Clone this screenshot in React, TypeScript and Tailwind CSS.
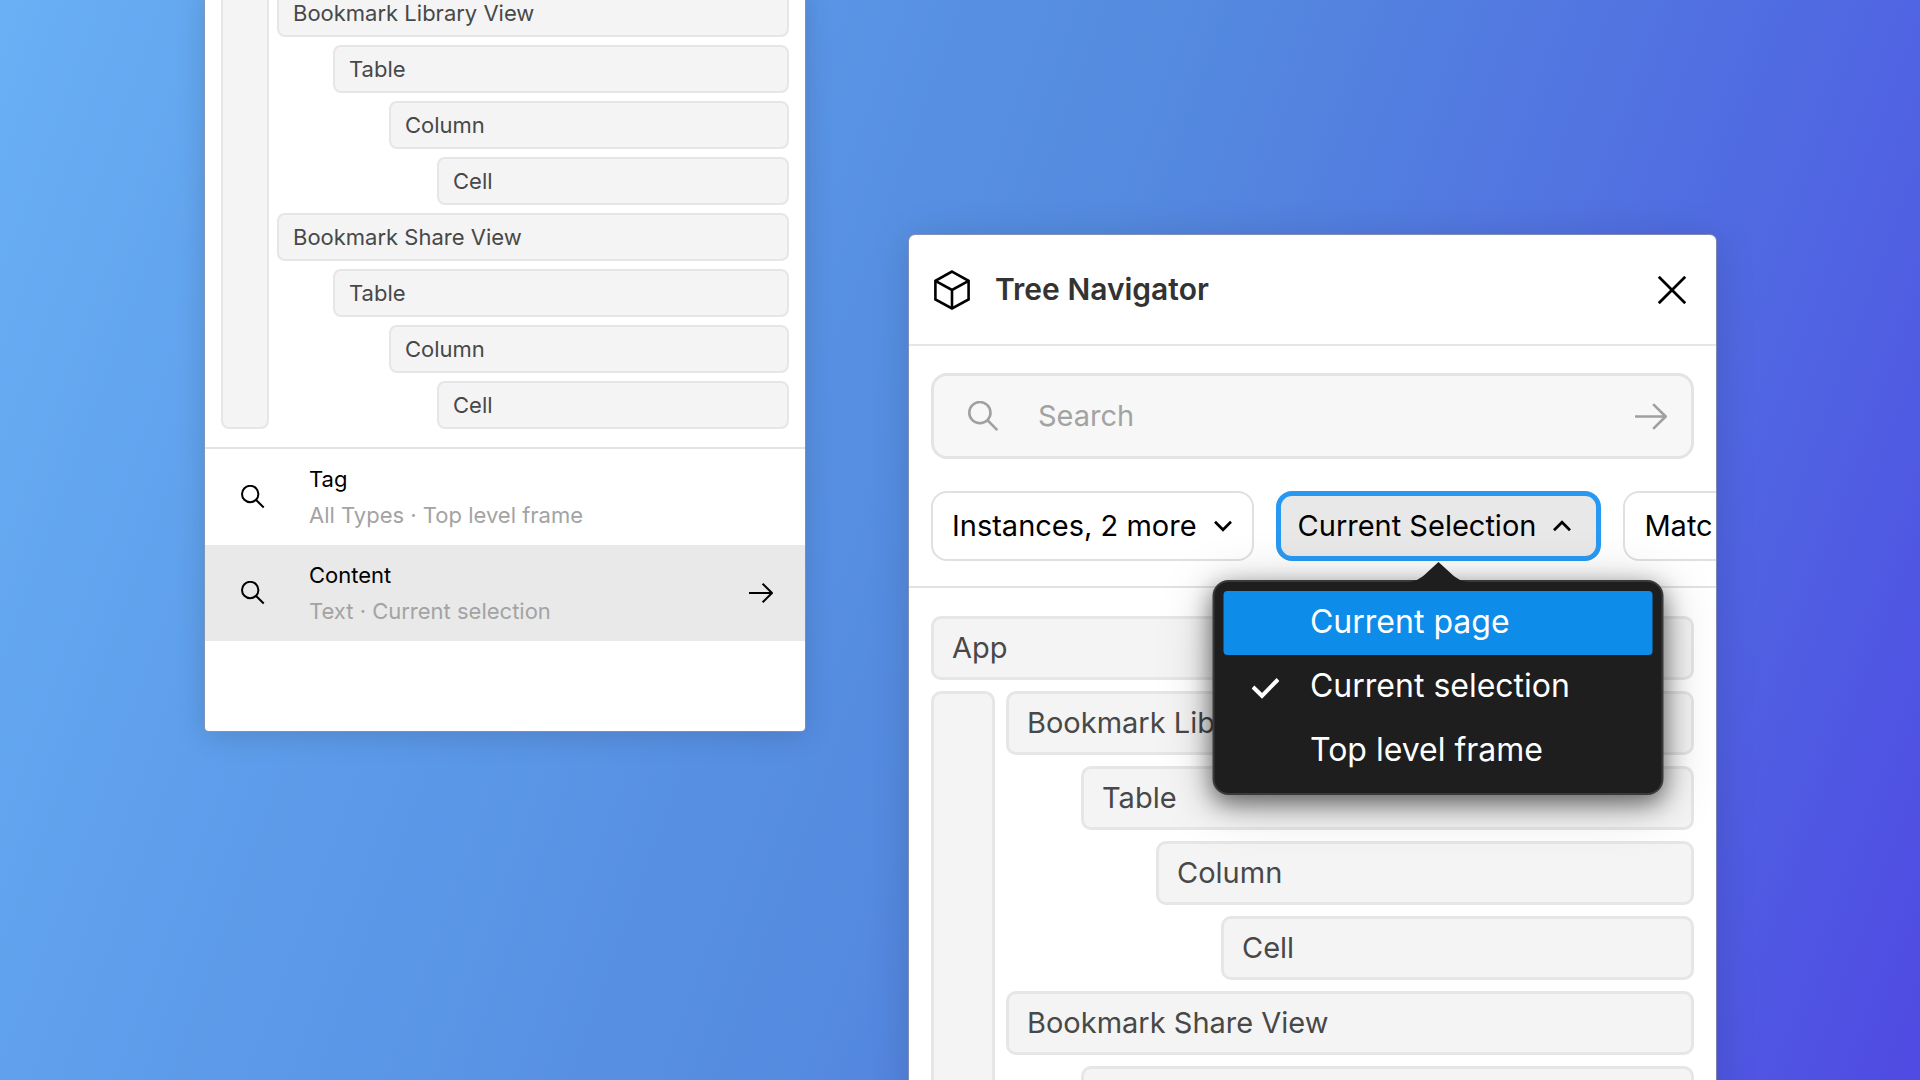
import { useState } from "react";

type Size = "sm" | "lg";

interface TreeNode {
    label: string;
    depth: number;
}

const bookmarkNodes: TreeNode[] = [
    { label: "Bookmark Library View", depth: 1 },
    { label: "Table", depth: 2 },
    { label: "Column", depth: 3 },
    { label: "Cell", depth: 4 },
    { label: "Bookmark Share View", depth: 1 },
    { label: "Table", depth: 2 },
    { label: "Column", depth: 3 },
    { label: "Cell", depth: 4 },
];

const savedSearches = [
    { title: "Tag", detail: "All Types · Top level frame" },
    { title: "Content", detail: "Text · Current selection" },
];

const scopes = ["Current page", "Current selection", "Top level frame"];

const indents: Record<Size, string[]> = {
    sm: ["", "", "ml-[56px]", "ml-[112px]", "ml-[160px]"],
    lg: ["", "", "ml-[75px]", "ml-[150px]", "ml-[215px]"],
};

function SearchIcon({ className }: { className?: string }) {
    return (
        <svg viewBox="0 0 24 24" fill="none" stroke="currentColor" strokeWidth="2" className={className} aria-hidden="true">
            <circle cx="9.2" cy="9" r="8.2" />
            <path d="M14.900 14.700L22.700 22.500" />
        </svg>
    );
}

function ArrowIcon({ className }: { className?: string }) {
    return (
        <svg viewBox="0 0 24 20" fill="none" stroke="currentColor" strokeWidth="2" strokeLinejoin="round" className={className} aria-hidden="true">
            <path d="M0 10H22.6M13.6 0.7L23 10L13.6 19.3" />
        </svg>
    );
}

function CubeIcon({ className }: { className?: string }) {
    return (
        <svg viewBox="0 0 36 40" fill="none" stroke="currentColor" strokeWidth="2.6" className={className} aria-hidden="true">
            <path d="M18 1.6L34.6 10.8V29.4L18 38.4L1.4 29.4V10.8L18 1.6Z" />
            <path d="M1.4 10.8L18 20L34.6 10.8M18 20V38.4" />
        </svg>
    );
}

function CloseIcon({ className }: { className?: string }) {
    return (
        <svg viewBox="0 0 28 28" stroke="currentColor" strokeWidth="2.8" className={className} aria-hidden="true">
            <path d="M0.8 0.8L27.2 27.2M27.2 0.8L0.8 27.2" />
        </svg>
    );
}

function ChevronIcon({ className }: { className?: string }) {
    return (
        <svg viewBox="0 0 18 12" fill="none" stroke="currentColor" strokeWidth="2.7" className={className} aria-hidden="true">
            <path d="M1 1.8L9 9.8L17 1.8" />
        </svg>
    );
}

function CheckIcon({ className }: { className?: string }) {
    return (
        <svg viewBox="0 0 28 21" fill="none" stroke="currentColor" strokeWidth="4" className={className} aria-hidden="true">
            <path d="M1.5 9L10.5 17.8L26.5 1.5" />
        </svg>
    );
}

function Tree({ nodes, size }: { nodes: TreeNode[]; size: Size }) {
    const small = size === "sm";
    return (
        <div className={small ? "flex gap-2" : "flex gap-[11px]"}>
            <div
                className={`shrink-0 border-[#e6e6e6] bg-[#f4f4f4] ${small ? "w-12 rounded-lg border-2" : "w-16 rounded-[10px] border-[3px]"}`}
            />
            <ul className={`flex min-w-0 grow flex-col ${small ? "gap-2" : "gap-[11px]"}`}>
                {nodes.map((node, idx) => (
                    <li key={idx} className={indents[size][node.depth]}>
                        <TreeRow label={node.label} size={size} />
                    </li>
                ))}
            </ul>
        </div>
    );
}

function TreeRow({ label, size }: { label: string; size: Size }) {
    return (
        <button
            className={`flex w-full items-center border-[#e6e6e6] bg-[#f4f4f4] text-left whitespace-nowrap text-[#484848]
            ${size === "sm" ? "h-12 rounded-lg border-2 px-3.5 text-[22px]" : "h-16 rounded-[10px] border-[3px] px-[18px] text-[29px]"}`}
        >
            {label}
        </button>
    );
}

function SavedSearchPanel() {
    return (
        <section className="-mt-[11px] w-[600px] shrink-0 rounded-b-sm bg-white pb-[90px] shadow-[0_0_0_1px_rgba(150,150,160,0.6),0_4px_30px_rgba(0,0,0,0.15)]">
            <div className="px-4 pb-[18px]">
                <Tree nodes={bookmarkNodes} size="sm" />
            </div>
            <ul className="border-t-2 border-[#e2e2e2]">
                {savedSearches.map((search) => {
                    const active = search.title === "Content";
                    return (
                        <li key={search.title}>
                            <button
                                className={`flex h-24 w-full items-center pr-8 pl-9 text-left text-[22px] leading-9 ${active ? "bg-[#e9e9e9]" : ""}`}
                            >
                                <SearchIcon className="h-6 w-6 shrink-0" />
                                <span className="ml-11 grow">
                                    <span className="block">{search.title}</span>
                                    <span className="block text-[#a3a3a3]">{search.detail}</span>
                                </span>
                                {active && <ArrowIcon className="h-5 w-6" />}
                            </button>
                        </li>
                    );
                })}
            </ul>
        </section>
    );
}

function ScopeMenu({ value, onChange }: { value: string; onChange: (scope: string) => void }) {
    return (
        <div className="absolute top-full left-1/2 z-10 w-[451px] -translate-x-1/2 pt-[19px]">
            <div
                role="menu"
                className="relative rounded-2xl border-2 border-[#3a3a3a] bg-[#1e1e1e] px-[9px] pt-[9px] pb-2.5 shadow-[0_8px_24px_rgba(0,0,0,0.55),0_8px_56px_rgba(0,0,0,0.2)]"
            >
                <svg viewBox="0 0 60 22" className="absolute -top-5 left-1/2 h-[22px] w-[60px] -translate-x-1/2" aria-hidden="true">
                    <path d="M0 20C9 19 13 15.500 18 11L30 0L42 11C47 15.500 51 19 60 20V22H0Z" fill="#1e1e1e" />
                </svg>
                {scopes.map((scope, idx) => (
                    <button
                        key={scope}
                        role="menuitemradio"
                        aria-checked={scope === value}
                        onClick={() => onChange(scope)}
                        className={`flex h-16 w-full items-center rounded pb-0.5 pl-7 text-[32px] text-white ${idx === 0 ? "bg-[#0d8ce9]" : ""}`}
                    >
                        <span className="mt-1 w-[58px] shrink-0">
                            {scope === value && <CheckIcon className="h-[21px] w-7" />}
                        </span>
                        {scope}
                    </button>
                ))}
            </div>
        </div>
    );
}

const pill = "flex h-[70px] items-center gap-[17px] rounded-2xl text-[29px] whitespace-nowrap";

function NavigatorPanel() {
    const [query, setQuery] = useState("");
    const [scope, setScope] = useState("Current selection");

    return (
        <section className="mt-[235px] w-[807px] shrink-0 overflow-hidden rounded-t-md bg-white shadow-[0_0_0_1px_rgba(150,150,170,0.7),0_4px_40px_rgba(0,0,0,0.15)]">
            <header className="flex h-[111px] items-center border-b-2 border-[#e6e6e6] px-[25px]">
                <CubeIcon className="h-10 w-9" />
                <h1 className="ml-[25px] grow text-[30px] font-semibold text-[#333]">Tree Navigator</h1>
                <button aria-label="Close" className="mr-[5px]">
                    <CloseIcon className="h-7 w-7" />
                </button>
            </header>

            <div className="border-b-2 border-[#e2e2e2] px-[22px] pt-[27px] pb-[25px]">
                <form className="flex h-[86px] items-center rounded-2xl border-[3px] border-[#e4e4e4] bg-[#f7f7f7] px-6 pl-[34px] text-[#a0a0a0]">
                    <label htmlFor="query">
                        <SearchIcon className="h-[31px] w-[31px]" />
                    </label>
                    <input
                        id="query"
                        value={query}
                        onChange={(e) => setQuery(e.target.value)}
                        placeholder="Search"
                        className="ml-[39px] min-w-0 grow text-[29px] text-black outline-none placeholder:text-[#a3a3a3]"
                    />
                    <button type="button" aria-label="Submit search">
                        <ArrowIcon className="h-[27px] w-8" />
                    </button>
                </form>

                <div className="mt-8 flex gap-[22px]">
                    <button className={`${pill} border-2 border-[#e0e0e0] pr-5 pl-[19px]`}>
                        Instances, 2 more
                        <ChevronIcon className="h-3 w-[18px]" />
                    </button>
                    <div className="relative">
                        <button className={`${pill} border-[5px] border-[#2899f2] bg-[#e8e8e8] pr-[25px] pl-[17px]`}>
                            Current Selection
                            <ChevronIcon className="h-3 w-[18px] rotate-180" />
                        </button>
                        <ScopeMenu value={scope} onChange={setScope} />
                    </div>
                    <button className={`${pill} shrink-0 border-2 border-[#e0e0e0] pr-20 pl-[19px]`}>Matc</button>
                </div>
            </div>

            <div className="flex flex-col gap-[11px] px-[22px] pt-7">
                <TreeRow label="App" size="lg" />
                <Tree nodes={bookmarkNodes} size="lg" />
            </div>
        </section>
    );
}

export default function App() {
    return (
        <main className="flex h-screen items-start gap-[104px] overflow-hidden bg-[linear-gradient(110deg,#69b0f5_0%,#5f9fec_19%,#548adf_52%,#5066e2_82%,#4f4ae3_100%)] pl-[205px] font-['Inter',sans-serif] text-black">
            <SavedSearchPanel />
            <NavigatorPanel />
        </main>
    );
}
